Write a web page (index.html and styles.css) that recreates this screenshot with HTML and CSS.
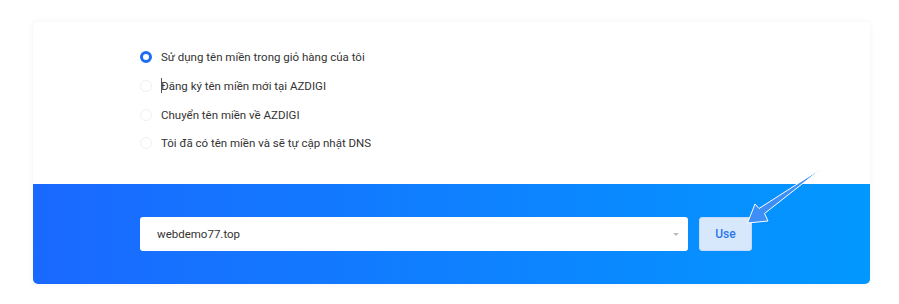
FILE: index.html
```html
<!DOCTYPE html>
<html>
<head>
<meta charset="utf-8">
<link rel="stylesheet" href="styles.css">
</head>
<body>
<div class="page">
  <div class="card">
    <div class="options">
      <label class="opt"><span class="radio checked"></span><span class="txt">Sử dụng tên miền trong giỏ hàng của tôi</span></label>
      <label class="opt"><span class="radio"></span><span class="txt"><span class="caret"></span>Đăng ký tên miền mới tại AZDIGI</span></label>
      <label class="opt"><span class="radio"></span><span class="txt">Chuyển tên miền về AZDIGI</span></label>
      <label class="opt"><span class="radio"></span><span class="txt">Tôi đã có tên miền và sẽ tự cập nhật DNS</span></label>
    </div>
    <div class="bar">
      <div class="select"><span class="val">webdemo77.top</span><span class="arrow-down"></span></div>
      <button class="use">Use</button>
    </div>
  </div>
  <svg class="pointer" width="100" height="70" viewBox="720 160 100 70">
    <path d="M823 167.5 L764.5 213.5 L768 221 L747.5 223 L755 204 L759 208.5 Z" fill="#3d8ef7" stroke="#ffffff" stroke-width="1" stroke-linejoin="round"/>
  </svg>
</div>
</body>
</html>
```
FILE: styles.css
```css
html, body { margin: 0; padding: 0; background: #fff; }
body { font-family: Roboto, "Noto Sans", Arial, sans-serif; }
.page { position: relative; padding: 22px 29px 20px 33px; }
.card {
  border-radius: 5px;
  background: #fff;
  box-shadow: 0 0 6px rgba(0,0,0,0.06);
  overflow: hidden;
}
.options {
  height: 162px;
  box-sizing: border-box;
  padding: 21px 0 0 107px;
  display: flex;
  flex-direction: column;
}
.opt {
  display: flex;
  align-items: center;
  height: 28.7px;
  font-size: 11.5px;
  color: #333;
}
.radio {
  width: 12px; height: 12px;
  border-radius: 50%;
  box-sizing: border-box;
  border: 1px solid #f0f0f0;
  margin-right: 9px;
  flex: none;
}
.radio.checked { border: 3.5px solid #1b6ff2; background: #fff; }
.txt { position: relative; }
.caret { position: absolute; left: 0; top: -1px; width: 1px; height: 15px; background: #555; }
.bar {
  height: 100px;
  box-sizing: border-box;
  padding: 33px 0 0 107px;
  background: linear-gradient(90deg, #1a69ff 0%, #0e82ff 55%, #0298ff 100%);
  display: flex;
  align-items: flex-start;
  gap: 11px;
}
.select {
  width: 548px; height: 34px;
  background: #fff;
  border-radius: 3px;
  display: flex;
  align-items: center;
  justify-content: space-between;
  padding: 0 9px 0 17px;
  box-sizing: border-box;
  font-size: 11.5px;
  color: #333;
}
.arrow-down {
  width: 0; height: 0;
  border-left: 3px solid transparent;
  border-right: 3px solid transparent;
  border-top: 3px solid #bbb;
}
.use {
  width: 53px; height: 34px;
  border: 1px solid #c5daf7;
  border-radius: 3px;
  background: #d7e7fc;
  color: #2a77ee;
  font-family: Roboto, Arial, sans-serif;
  font-size: 12px;
  font-weight: 500;
  padding: 0;
}
.pointer { position: absolute; left: 720px; top: 160px; }
```
